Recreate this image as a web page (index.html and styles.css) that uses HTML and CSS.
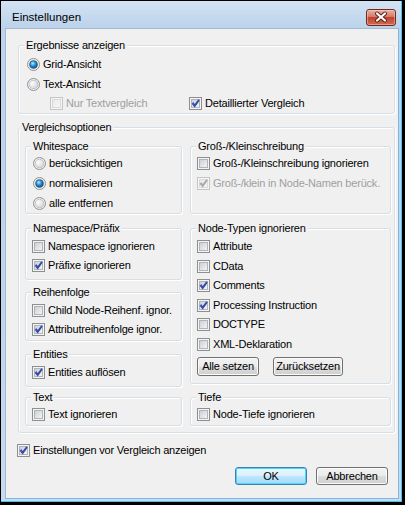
FILE: index.html
```html
<!DOCTYPE html>
<html lang="de">
<head>
<meta charset="utf-8">
<title>Einstellungen</title>
<link rel="stylesheet" href="styles.css">
</head>
<body>
<svg class="defs" width="0" height="0" aria-hidden="true">
  <defs>
    <linearGradient id="boxfill" x1="0" y1="0" x2="1" y2="1">
      <stop offset="0" stop-color="#c9cdd3"/>
      <stop offset="1" stop-color="#f7f7f7"/>
    </linearGradient>
    <linearGradient id="boxfill-d" x1="0" y1="0" x2="1" y2="1">
      <stop offset="0" stop-color="#e9e9e9"/>
      <stop offset="1" stop-color="#f7f7f7"/>
    </linearGradient>
    <linearGradient id="tickg" x1="0" y1="0" x2="1" y2="1">
      <stop offset="0" stop-color="#4a64c4"/>
      <stop offset="1" stop-color="#1f3594"/>
    </linearGradient>
    <radialGradient id="rfill" cx=".35" cy=".35" r=".8">
      <stop offset="0" stop-color="#fdfdfd"/>
      <stop offset="1" stop-color="#cdd0d4"/>
    </radialGradient>
    <radialGradient id="rdot" cx=".4" cy=".35" r=".75">
      <stop offset="0" stop-color="#bdeeff"/>
      <stop offset=".4" stop-color="#2b9de3"/>
      <stop offset="1" stop-color="#0b3f78"/>
    </radialGradient>
    <symbol id="box" viewBox="0 0 13 13">
      <rect x=".5" y=".5" width="12" height="12" fill="#f4f4f4" stroke="#8e8f8f"/>
      <rect x="2.5" y="2.5" width="8" height="8" fill="url(#boxfill)" stroke="#b1b5ba"/>
    </symbol>
    <symbol id="box-d" viewBox="0 0 13 13">
      <rect x=".5" y=".5" width="12" height="12" fill="#f6f6f6" stroke="#c5c5c5"/>
      <rect x="2.5" y="2.5" width="8" height="8" fill="url(#boxfill-d)" stroke="#dadada"/>
    </symbol>
    <symbol id="tick" viewBox="0 0 13 13">
      <path d="M2.6 6.7 L4.3 5.1 L5.7 7.0 L9.3 2.2 L10.8 3.5 L5.7 10.5 Z" fill="url(#tickg)"/>
    </symbol>
    <symbol id="tick-d" viewBox="0 0 13 13">
      <path d="M2.6 6.7 L4.3 5.1 L5.7 7.0 L9.3 2.2 L10.8 3.5 L5.7 10.5 Z" fill="#a9a9a9"/>
    </symbol>
    <symbol id="radio" viewBox="0 0 13 13">
      <circle cx="6.5" cy="6.5" r="6" fill="#f4f4f4" stroke="#8e8f8f"/>
      <circle cx="6.5" cy="6.5" r="4.3" fill="url(#rfill)" stroke="#b4b7bb" stroke-width=".8"/>
    </symbol>
    <symbol id="dot" viewBox="0 0 13 13">
      <circle cx="6.5" cy="6.5" r="3.8" fill="url(#rdot)" stroke="#0f3f70" stroke-width=".6"/>
    </symbol>
  </defs>
</svg>

<div class="window">
  <div class="titlebar">
    <span class="title">Einstellungen</span>
    <span class="close">
      <svg class="close-x" viewBox="0 0 30 17" width="30" height="17">
        <path d="M11 4.5 L19 11.5 M19 4.5 L11 11.5" stroke="#5b1c12" stroke-width="4" stroke-linecap="round"/>
        <path d="M11 4.5 L19 11.5 M19 4.5 L11 11.5" stroke="#ffffff" stroke-width="2.2" stroke-linecap="round"/>
      </svg>
    </span>
  </div>

  <div class="client">
    <div class="group g-results">
      <span class="legend">Ergebnisse anzeigen</span>
      <div class="opt h20"><svg class="ctl"><use href="#radio"/><use href="#dot"/></svg>Grid-Ansicht</div>
      <div class="opt h21"><svg class="ctl"><use href="#radio"/></svg>Text-Ansicht</div>
      <div class="subrow">
        <div class="opt disabled w139"><svg class="ctl"><use href="#box-d"/></svg>Nur Textvergleich</div>
        <div class="opt"><svg class="ctl"><use href="#box"/><use href="#tick"/></svg>Detaillierter Vergleich</div>
      </div>
    </div>

    <div class="group g-compare">
      <span class="legend legend-tight">Vergleichsoptionen</span>
      <div class="cols">
        <div class="col col-left">
          <div class="group sub ws">
            <span class="legend">Whitespace</span>
            <div class="opt h20"><svg class="ctl"><use href="#radio"/></svg>berücksichtigen</div>
            <div class="opt h20"><svg class="ctl"><use href="#radio"/><use href="#dot"/></svg>normalisieren</div>
            <div class="opt h20"><svg class="ctl"><use href="#radio"/></svg>alle entfernen</div>
          </div>
          <div class="group sub ns">
            <span class="legend">Namespace/Präfix</span>
            <div class="opt h19"><svg class="ctl"><use href="#box"/></svg>Namespace ignorieren</div>
            <div class="opt h19"><svg class="ctl"><use href="#box"/><use href="#tick"/></svg>Präfixe ignorieren</div>
          </div>
          <div class="group sub rf">
            <span class="legend">Reihenfolge</span>
            <div class="opt h19"><svg class="ctl"><use href="#box"/></svg>Child Node-Reihenf. ignor.</div>
            <div class="opt h19"><svg class="ctl"><use href="#box"/><use href="#tick"/></svg>Attributreihenfolge ignor.</div>
          </div>
          <div class="group sub en">
            <span class="legend">Entities</span>
            <div class="opt h19"><svg class="ctl"><use href="#box"/><use href="#tick"/></svg>Entities auflösen</div>
          </div>
          <div class="group sub tx">
            <span class="legend">Text</span>
            <div class="opt h19"><svg class="ctl"><use href="#box"/></svg>Text ignorieren</div>
          </div>
        </div>

        <div class="col col-right">
          <div class="group sub gk">
            <span class="legend">Groß-/Kleinschreibung</span>
            <div class="opt h20"><svg class="ctl"><use href="#box"/></svg>Groß-/Kleinschreibung ignorieren</div>
            <div class="opt h20 disabled"><svg class="ctl"><use href="#box-d"/><use href="#tick-d"/></svg>Groß-/klein in Node-Namen berück.</div>
          </div>
          <div class="group sub nt">
            <span class="legend">Node-Typen ignorieren</span>
            <div class="opt h195"><svg class="ctl"><use href="#box"/></svg>Attribute</div>
            <div class="opt h195"><svg class="ctl"><use href="#box"/></svg>CData</div>
            <div class="opt h195"><svg class="ctl"><use href="#box"/><use href="#tick"/></svg>Comments</div>
            <div class="opt h195"><svg class="ctl"><use href="#box"/><use href="#tick"/></svg>Processing Instruction</div>
            <div class="opt h195"><svg class="ctl"><use href="#box"/></svg>DOCTYPE</div>
            <div class="opt h195"><svg class="ctl"><use href="#box"/></svg>XML-Deklaration</div>
            <div class="nt-buttons">
              <button class="btn btn-small w62">Alle setzen</button>
              <button class="btn btn-small w70">Zurücksetzen</button>
            </div>
          </div>
          <div class="group sub tf">
            <span class="legend">Tiefe</span>
            <div class="opt h19"><svg class="ctl"><use href="#box"/></svg>Node-Tiefe ignorieren</div>
          </div>
        </div>
      </div>
    </div>

    <div class="opt final"><svg class="ctl"><use href="#box"/><use href="#tick"/></svg>Einstellungen vor Vergleich anzeigen</div>

    <div class="actions">
      <button class="btn btn-default">OK</button>
      <button class="btn">Abbrechen</button>
    </div>
  </div>
</div>
</body>
</html>
```

FILE: styles.css
```css
* {
  box-sizing: border-box;
}

body {
  margin: 0;
  background: #ffffff;
  color: #000000;
  font-family: "Liberation Sans", Arial, sans-serif;
  font-size: 11px;
  line-height: 13px;
  letter-spacing: -0.2px;
}

.defs {
  display: block;
  width: 0;
  height: 0;
  overflow: hidden;
}

.window {
  width: 405px;
  height: 505px;
  border-style: solid;
  border-color: #000000;
  border-width: 1px 3px 3px 1px;
  padding: 0 3px 3px 4px;
  display: flex;
  flex-direction: column;
  background: linear-gradient(180deg, #d3e3f3 0px, #bcd3eb 26px, #bfd5ec 60%, #c6dbef 100%);
  box-shadow: inset -1px -1px 0 #4fc2ec;
}

.titlebar {
  height: 27px;
  flex: none;
  display: flex;
  justify-content: space-between;
  align-items: flex-start;
  padding-left: 7px;
}

.title {
  margin-top: 10px;
  font-size: 11.5px;
  letter-spacing: 0;
  color: #000000;
}

.close {
  margin-top: 8px;
  margin-right: 3px;
  width: 30px;
  height: 17px;
  border: 1px solid #6e2a20;
  border-radius: 3px;
  background: linear-gradient(180deg, #eab0a4 0%, #d37a68 45%, #c0432f 50%, #cf6a52 100%);
  box-shadow: inset 0 0 0 1px rgba(255, 220, 210, 0.45);
  display: flex;
  align-items: center;
  justify-content: center;
  overflow: hidden;
}

.close-x {
  display: block;
  flex: none;
  margin: -1px;
}

.client {
  flex: 1;
  background: #f0f0f0;
  border: 1px solid #a3b9d2;
  border-right-color: #7fb8dc;
  border-bottom-color: #7fb8dc;
  display: flex;
  flex-direction: column;
}

.group {
  position: relative;
  border: 1px solid #d5dfe5;
  border-radius: 3px;
  box-shadow: inset 1px 1px 0 #ffffff, 1px 1px 0 #ffffff;
  flex: none;
}

.legend {
  position: absolute;
  top: -7px;
  left: 5px;
  padding: 0 2px;
  background: #f0f0f0;
  line-height: 13px;
  white-space: nowrap;
}

.legend-tight {
  left: 1px;
}

.opt {
  display: flex;
  align-items: center;
  gap: 3px;
  white-space: nowrap;
}

.ctl {
  display: block;
  flex: none;
  width: 13px;
  height: 13px;
}

.disabled {
  color: #9f9f9f;
}

.h19 { height: 19px; }
.h195 { height: 19.5px; }
.h20 { height: 20px; }
.h21 { height: 21px; }
.w139 { width: 139px; }

/* Ergebnisse anzeigen */
.g-results {
  margin: 16px 0 0 12px;
  width: 377px;
  height: 69px;
  padding: 8px 0 0 8px;
}

.subrow {
  display: flex;
  height: 17px;
  align-items: center;
  padding-left: 23px;
}

/* Vergleichsoptionen */
.g-compare {
  margin: 13px 0 0 12px;
  width: 377px;
  height: 306px;
  padding: 18px 0 0 6px;
}

.cols {
  display: flex;
  gap: 8px;
}

.col {
  display: flex;
  flex-direction: column;
}

.col-left {
  width: 157px;
}

.col-right {
  width: 201px;
}

.sub {
  padding-left: 6px;
}

.ws {
  height: 68px;
  padding-top: 6px;
  padding-left: 7px;
}

.ns {
  margin-top: 14px;
  height: 52px;
  padding-top: 8px;
}

.rf {
  margin-top: 12px;
  height: 49px;
  padding-top: 8px;
}

.en {
  margin-top: 13px;
  height: 33px;
  padding-top: 8px;
}

.tx {
  margin-top: 10px;
  height: 29px;
  padding-top: 7px;
}

.gk {
  height: 68px;
  padding-top: 6px;
}

.nt {
  margin-top: 14px;
  height: 156px;
  padding-top: 8px;
}

.nt-buttons {
  display: flex;
  gap: 14px;
  margin-top: 3px;
}

.tf {
  margin-top: 13px;
  height: 29px;
  padding-top: 7px;
}

.final {
  margin: 8px 0 0 11px;
  height: 18px;
}

/* Buttons */
.btn {
  font-family: "Liberation Sans", Arial, sans-serif;
  font-size: 11px;
  letter-spacing: -0.2px;
  line-height: 13px;
  color: #000000;
  padding: 0;
  width: 72px;
  height: 18px;
  border: 1px solid #707070;
  border-radius: 3px;
  background: linear-gradient(180deg, #f2f2f2 0%, #ebebeb 50%, #dddddd 50%, #cfcfcf 100%);
  box-shadow: inset 0 0 0 1px #fbfbfb;
}

.btn-small {
  height: 19px;
}

.w62 { width: 62px; }
.w70 { width: 70px; }

.btn-default {
  border-color: #3c7fb1;
  background: linear-gradient(180deg, #eaf6fd 0%, #d9f0fc 50%, #bee6fd 50%, #a7d9f5 100%);
  box-shadow: inset 0 0 0 1px #48d8fb;
}

.actions {
  display: flex;
  justify-content: flex-end;
  gap: 9px;
  margin-top: 8px;
  padding-right: 10px;
}
```
